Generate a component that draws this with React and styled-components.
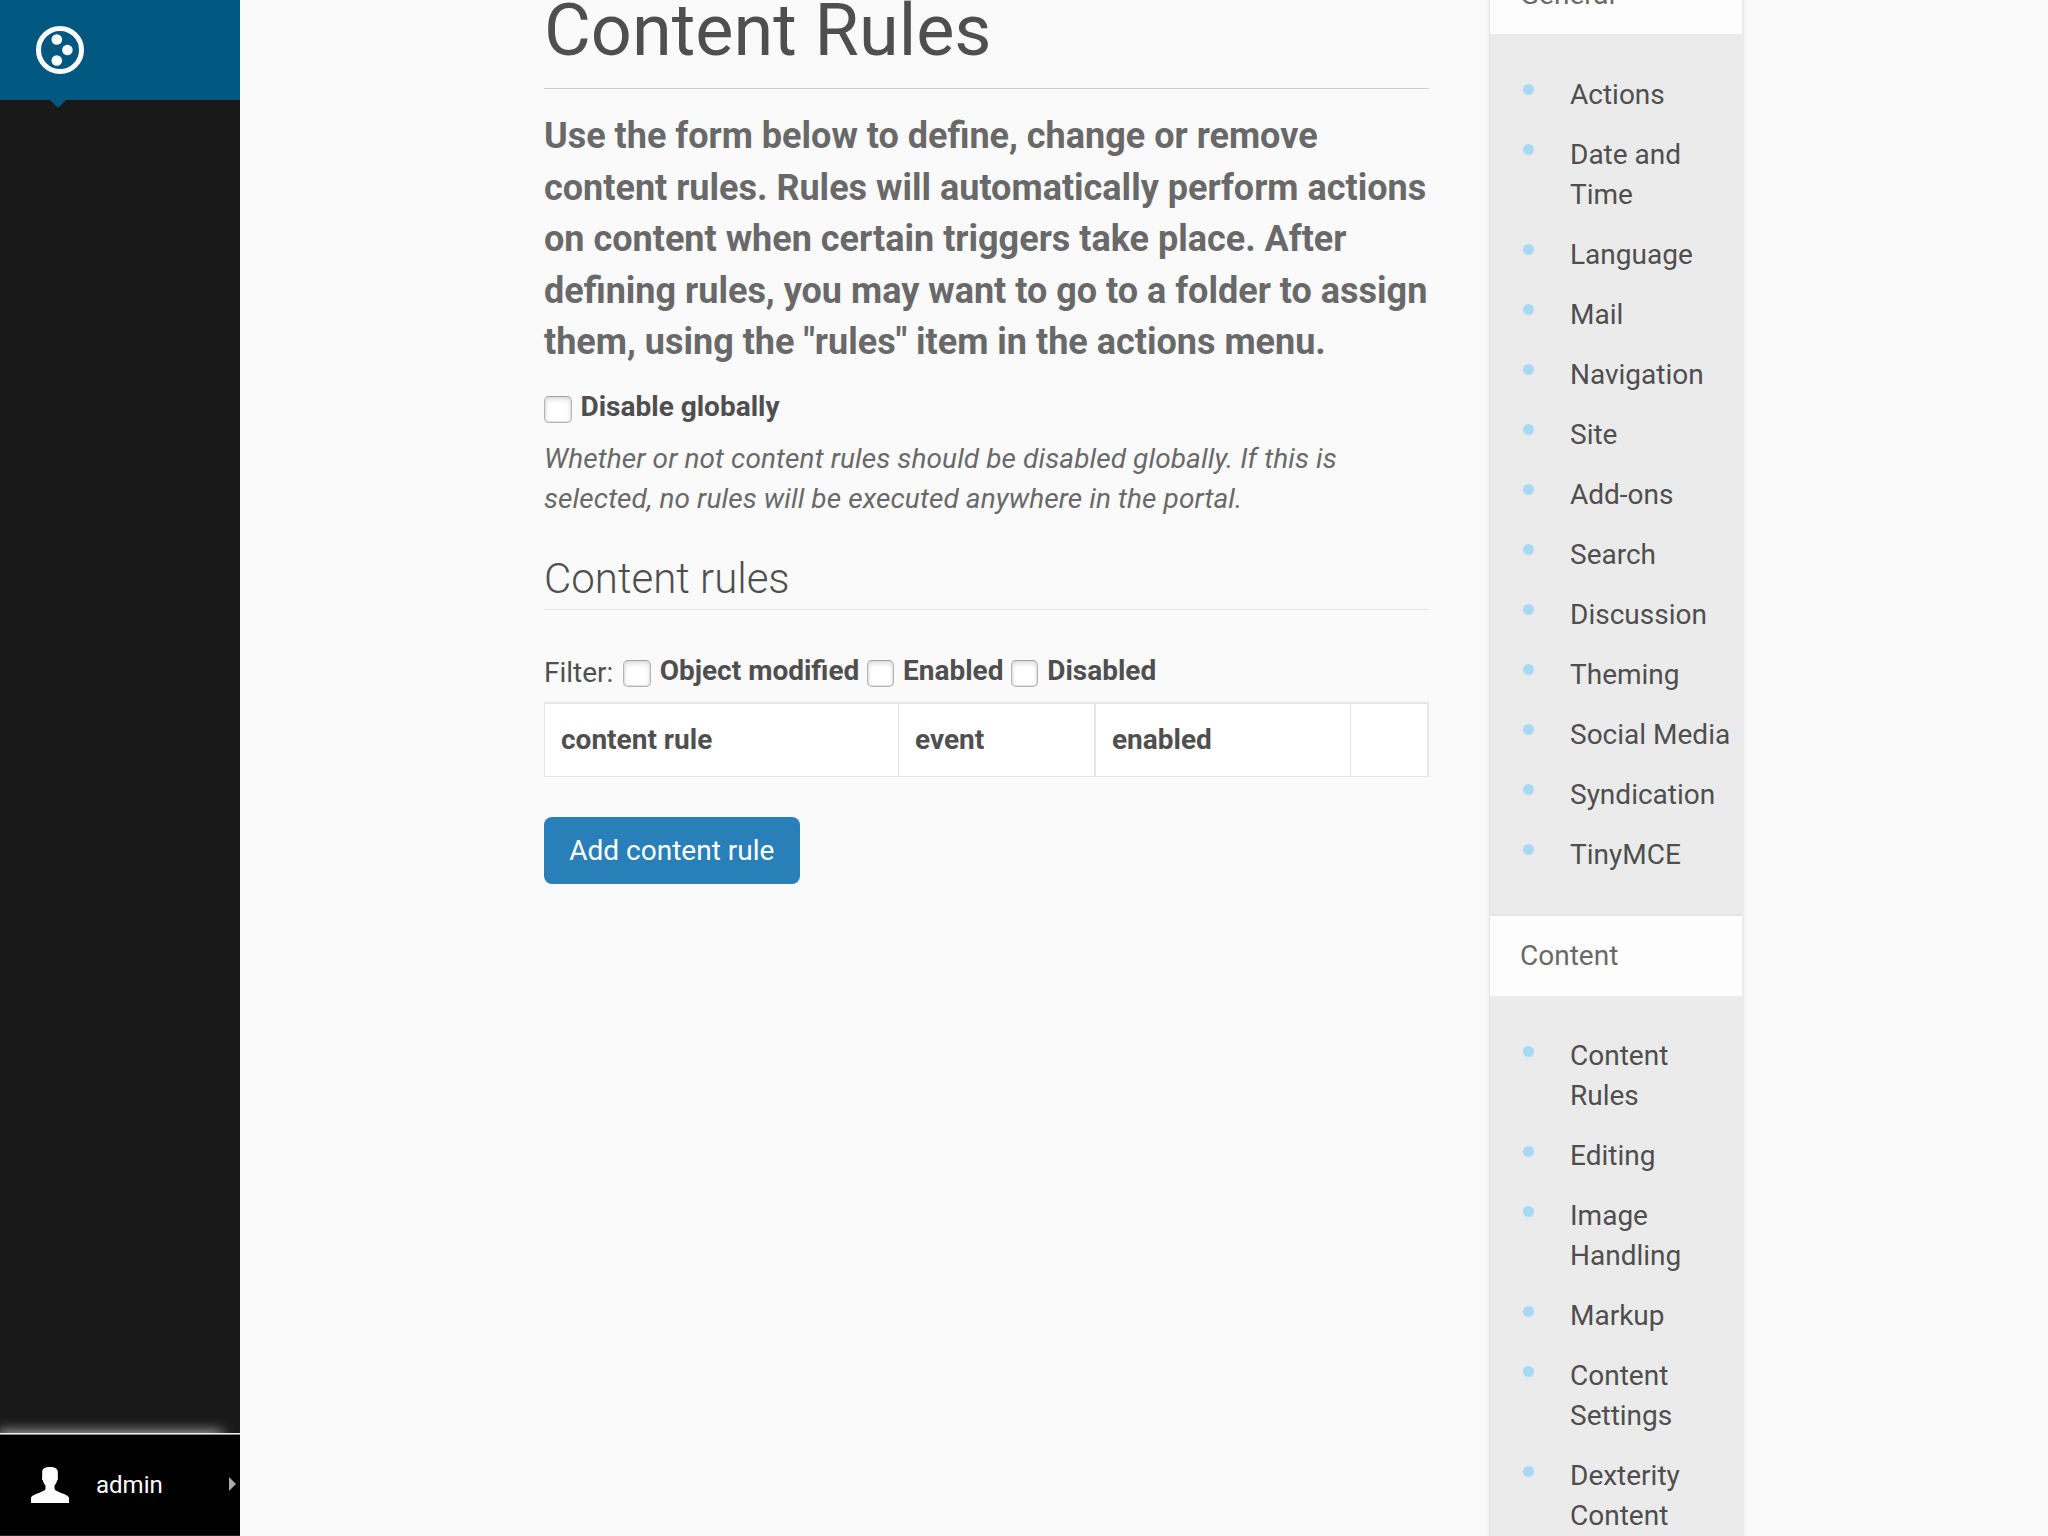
import React from "react";
import styled, { createGlobalStyle } from "styled-components";

const GlobalStyle = createGlobalStyle`
  *, *::before, *::after { box-sizing: border-box; }
  html, body { margin: 0; height: 100%; overflow: hidden; }
  body {
    background: #fafafa;
    color: #4f4f4f;
    font: 400 28px/40px Roboto, "Noto Sans", sans-serif;
  }
`;

const Page = styled.div`
  display: flex;
  height: 1536px;
  overflow: hidden;
`;

const Toolbar = styled.nav`
  display: flex;
  flex-direction: column;
  flex: none;
  width: 240px;
  overflow: hidden;
  background: #191919;
  color: #fff;
`;

const ToolbarHeader = styled.div`
  position: relative;
  height: 100px;
  padding: 26px 36px;
  background: #005880;

  &::after {
    content: "";
    position: absolute;
    top: 100px;
    left: 50px;
    border: solid transparent;
    border-width: 8px 8px 0;
    border-top-color: #005880;
  }
`;

const Logo = styled.svg`
  display: block;
  width: 48px;
  height: 48px;
`;

const Personal = styled.div`
  display: flex;
  align-items: center;
  height: 103px;
  margin-top: auto;
  padding: 0 4px 0 31px;
  background: #000;
  border-top: 1px solid #ededed;
  border-bottom: 1px solid #222;
  box-shadow: inset 0 1px 0 #868a8a, -10px -10px 12px -8px #aaa;
`;

const UserIcon = styled.svg`
  width: 38px;
  height: 36px;
`;

const UserName = styled.span`
  flex: 1;
  margin-left: 27px;
  font-size: 24px;
`;

const Caret = styled.i`
  margin-bottom: 2px;
  border: solid transparent;
  border-width: 7px 0 7px 7px;
  border-left-color: #aaa;
`;

const Main = styled.main`
  flex: none;
  width: 885px;
  margin-left: 304px;
`;

const Title = styled.h1`
  height: 89px;
  margin: 0;
  border-bottom: 1px solid #ccc;
  font-size: 72px;
  font-weight: 400;
  line-height: 62px;
`;

const Lead = styled.p`
  margin: 22.4px 0 18.6px;
  color: #696969;
  font-size: 36px;
  font-weight: 700;
  line-height: 51.43px;
`;

const Label = styled.label`
  display: flex;
  align-items: flex-start;
  font-weight: 700;
`;

const Checkbox = styled.input`
  appearance: none;
  flex: none;
  width: 27.5px;
  height: 27px;
  margin: 9px 9px 0 0;
  background: #fff;
  border: 1px solid #b4b4b4;
  border-top-color: #a0a0a0;
  border-radius: 5px;
  box-shadow: inset 0 0 0 1px #e2e2e2, inset 0 2px 5px #d4d4d4;
`;

const Help = styled.p`
  margin: 12px 0 0;
  color: #696969;
  font-style: italic;
  letter-spacing: 0.1px;
`;

const Subtitle = styled.h2`
  height: 71px;
  margin: 20px 0 0;
  border-bottom: 1px solid #e5e5e5;
  font-size: 42px;
  font-weight: 300;
  line-height: 80px;
`;

const Filters = styled.div`
  display: flex;
  gap: 7.2px;
  margin-top: 41px;
`;

const FilterText = styled.span`
  margin: 2px 2.6px 0 0;
`;

const Table = styled.div`
  display: grid;
  grid-template-columns: 353px 196px 256px 1fr;
  height: 75px;
  margin-top: 9px;
  background: #fff;
  border: solid #e5e5e5;
  border-width: 2px 2px 1px 1px;
`;

const HeadCell = styled.div`
  padding: 16px;
  font-weight: 700;
  border-left: ${(p) => p.$line || 0}px solid #e5e5e5;
`;

const Button = styled.button`
  display: block;
  height: 67px;
  margin-top: 40px;
  padding: 0 25.5px 0 25.3px;
  background: #2980b9;
  border: 0;
  border-radius: 8px;
  color: #fff;
  font: inherit;
`;

const Portlet = styled.aside`
  flex: none;
  width: 255px;
  height: 1640px;
  margin: -48px 0 0 60px;
  background: #ebebeb;
  border: solid #e3e3e3;
  border-width: 2px 2px 2px 1px;
  border-right-color: #ebebeb;
  box-shadow: 0 1px 6px rgba(0, 0, 0, 0.07);
`;

const SectionHeader = styled.header`
  height: ${(p) => (p.$ruled ? 82 : 80)}px;
  padding: ${(p) => (p.$ruled ? 20 : 21)}px 30px 0;
  background: #fdfdfd;
  border-top: ${(p) => (p.$ruled ? 2 : 0)}px solid #e5e5e5;
  color: #696969;
`;

const Items = styled.ul`
  display: flex;
  flex-direction: column;
  gap: 20px;
  margin: 0;
  padding: ${(p) => (p.$ruled ? "40px 8px 40px 33px" : "41px 8px 39px 33px")};
  list-style: none;
`;

const Item = styled.li`
  display: flex;

  &::before {
    content: "";
    flex: none;
    width: 11px;
    height: 11px;
    margin: ${(p) => (p.$ruled ? 10 : 9)}px 36px 0 0;
    border-radius: 50%;
    background: #a7d9f3;
  }
`;

const general = ["Actions", "Date and Time", "Language", "Mail", "Navigation", "Site", "Add-ons", "Search", "Discussion", "Theming", "Social Media", "Syndication", "TinyMCE"];
const content = ["Content Rules", "Editing", "Image Handling", "Markup", "Content Settings", "Dexterity Content"];

function Section({ title, items, ruled }) {
  return (
    <section>
      <SectionHeader $ruled={ruled}>{title}</SectionHeader>
      <Items $ruled={ruled}>
        {items.map((name) => <Item key={name} $ruled={ruled}><span>{name}</span></Item>)}
      </Items>
    </section>
  );
}

function Check({ children }) {
  return <Label><Checkbox type="checkbox" />{children}</Label>;
}

export default function App() {
  return (
    <>
      <GlobalStyle />
      <Page>
        <Toolbar>
          <ToolbarHeader>
            <Logo viewBox="0 0 48 48" fill="#fff">
              <circle cx="24" cy="24" r="21.5" fill="none" stroke="#fff" strokeWidth="5" />
              <circle cx="20.8" cy="13.5" r="5.3" />
              <circle cx="31.4" cy="24" r="5.3" />
              <circle cx="20.8" cy="34.5" r="5.3" />
            </Logo>
          </ToolbarHeader>
          <Personal>
            <UserIcon viewBox="0 0 38 36" fill="#fff">
              <path d="M0 36V31.5C0 28.5 4 27.5 9 25.5C13 23.8 14.5 23 14.5 21.5V18.5C13 17 12.4 15.5 12 13.5C11 13 10.7 11.5 11.2 10.4V5C11.2 1.8 14 0 19 0S26.8 1.8 26.8 5V10.4C27.3 11.5 27 13 26 13.5C25.6 15.5 25 17 23.5 18.5V21.5C23.5 23 25 23.8 29 25.5C34 27.5 38 28.5 38 31.5V36Z" />
            </UserIcon>
            <UserName>admin</UserName>
            <Caret />
          </Personal>
        </Toolbar>
        <Main>
          <Title>Content Rules</Title>
          <Lead>
            Use the form below to define, change or remove content rules. Rules will automatically perform actions on content when certain triggers take place. After defining rules, you may want to go to a folder to assign them, using the "rules" item in the actions menu.
          </Lead>
          <Check>Disable globally</Check>
          <Help>Whether or not content rules should be disabled globally. If this is selected, no rules will be executed anywhere in the portal.</Help>
          <Subtitle>Content rules</Subtitle>
          <Filters>
            <FilterText>Filter:</FilterText>
            <Check>Object modified</Check>
            <Check>Enabled</Check>
            <Check>Disabled</Check>
          </Filters>
          <Table>
            <HeadCell>content rule</HeadCell>
            <HeadCell $line={1}>event</HeadCell>
            <HeadCell $line={2}>enabled</HeadCell>
            <HeadCell $line={1} />
          </Table>
          <Button>Add content rule</Button>
        </Main>
        <Portlet>
          <Section title="General" items={general} />
          <Section title="Content" items={content} ruled />
        </Portlet>
      </Page>
    </>
  );
}
